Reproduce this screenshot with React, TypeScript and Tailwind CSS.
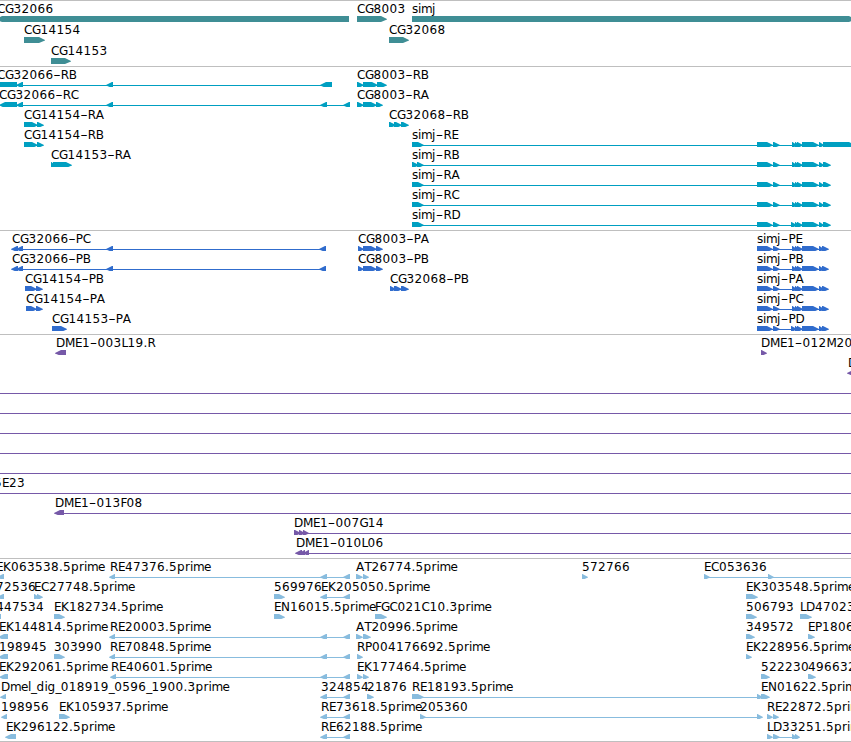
import { Fragment } from 'react';

type Dir = 'r' | 'l' | 'b';
type Feature = [Dir, number, number];
type Label = [number, string];

interface RowData {
  labels?: Label[];
  features?: Feature[];
  lines?: [number, number][];
}

interface TrackData {
  name: string;
  color: string;
  pitch: number;
  pad: string;
  rows: RowData[];
}

// Horizontal advance of each character in the label face, in pixels.
const ADVANCE: Record<string, number> = {
  C: 8, G: 8.4, R: 8, B: 8, A: 8.6, P: 7, E: 7, D: 9, M: 10, F: 6, L: 6, K: 8,
  T: 7, N: 9, '-': 7.4, '.': 4, _: 5.4, s: 6, i: 3, m: 11, j: 4, p: 8, r: 5,
  e: 7, d: 8, g: 8, l: 3,
};

const advance = (text: string) =>
  text.split('').reduce((sum, ch) => sum + (ADVANCE[ch] ?? 8), 0);

function glyphPositions(x: number, text: string) {
  return text
    .split('')
    .map((_, i) => x + advance(text.slice(0, i)))
    .join(' ');
}

// Hyphens are stretched to the wide dash of the label face.
function LabelText({ label: [x, text] }: { label: Label }) {
  const [head, tail] = text.split('-');
  const dashX = x + advance(head);
  return (
    <text y={12} fontSize={12} fill="#000">
      <tspan x={glyphPositions(x, head)}>{head}</tspan>
      {tail !== undefined && (
        <Fragment>
          <tspan x={dashX - 0.2} textLength={7.5} lengthAdjust="spacingAndGlyphs">-</tspan>
          <tspan x={glyphPositions(dashX + ADVANCE['-'], tail)}>{tail}</tspan>
        </Fragment>
      )}
    </text>
  );
}

function Exon({ feature: [dir, a, b] }: { feature: Feature }) {
  if (dir === 'b') return <rect x={a} y={15} width={b - a} height={6} />;
  const head = Math.min(b - a - 0.5, 6);
  const pts =
    dir === 'r'
      ? `${a},15 ${b - head},15 ${b},17.9 ${b},18.4 ${b - head},21 ${a},21`
      : `${b},15 ${a + head},15 ${a},17.9 ${a},18.4 ${a + head},21 ${b},21`;
  return <polygon points={pts} />;
}

function Row({ row, height, color }: { row: RowData; height: number; color: string }) {
  return (
    <svg width={851} height={height} viewBox={`0 0 851 ${height}`} className="block shrink-0 overflow-hidden">
      <g fill={color}>
        {row.lines?.map(([a, b], i) => (
          <rect key={i} x={a} y={18} width={b - a} height={1} shapeRendering="crispEdges" />
        ))}
        {row.features?.map((f, i) => <Exon key={i} feature={f} />)}
      </g>
      {row.labels?.map((label, i) => <LabelText key={i} label={label} />)}
    </svg>
  );
}

const simjExons = (start: number): Feature[] => [
  ['r', 757, 773], ['r', 773, 780], ['r', start, 797], ['r', 795, 799], ['r', 797, 803],
  ['r', 802, 819], ['r', 819, 824],
];

const simjTranscript = (head: Feature[], tail: Feature, start = 792) => ({
  lines: [[412, 825]] as [number, number][],
  features: [...head, ...simjExons(start), tail],
});

const simjProtein = (start = 792) => ({
  lines: [[757, 825]] as [number, number][],
  features: [...simjExons(start), ['r', 822, 829] as Feature],
});

const head412: Feature[] = [['r', 412, 424]];
const tail830: Feature = ['r', 823, 831];
const pair: Feature[] = [['l', 320, 327], ['l', 343, 350]];
const re = (x = 110) => ({
  features: [['l', x - 1, x + 5] as Feature, ...pair],
  line: [x, 350] as [number, number],
});

const sa = simjTranscript([['r', 412, 419], ['r', 417, 424]], tail830);
const sb = simjTranscript(head412, tail830);
const sd = simjTranscript(head412, tail830, 791);
const se = simjTranscript(head412, ['r', 823, 855]);

const full: RowData = { lines: [[0, 851]] };

const TRACKS: TrackData[] = [
  {
    name: 'genes', color: '#3f8e95', pitch: 21, pad: 'pb-[2px]',
    rows: [
      { labels: [[-3, 'CG32066'], [357, 'CG8003'], [412, 'simj']], features: [['l', -4, 349], ['r', 357, 387], ['r', 412, 855]] },
      { labels: [[24, 'CG14154'], [389, 'CG32068']], features: [['r', 24, 45], ['r', 389, 409]] },
      { labels: [[51, 'CG14153']], features: [['r', 51, 71]] },
    ],
  },
  {
    name: 'transcripts', color: '#009fc1', pitch: 20, pad: 'pb-[3px]',
    rows: [
      {
        labels: [[-3, 'CG32066-RB'], [357, 'CG8003-RB']],
        lines: [[17, 332]],
        features: [['b', 0, 17], ['l', 16, 23], ['l', 106, 113], ['l', 320, 332], ['r', 357, 364], ['r', 363, 378], ['r', 377, 387]],
      },
      {
        labels: [[-1, 'CG32066-RC'], [357, 'CG8003-RA']],
        lines: [[17, 350]],
        features: [['l', -1, 17], ['l', 16, 23], ['l', 106, 113], ['l', 320, 327], ['l', 343, 350], ['r', 357, 364], ['r', 363, 377], ['r', 376, 383]],
      },
      {
        labels: [[24, 'CG14154-RA'], [389, 'CG32068-RB']],
        features: [['r', 24, 38], ['r', 37, 44], ['r', 389, 396], ['r', 394, 402], ['r', 401, 409]],
      },
      {
        labels: [[24, 'CG14154-RB'], [412, 'simj-RE']],
        lines: se.lines,
        features: [['r', 24, 38], ['r', 37, 44], ...se.features],
      },
      { labels: [[51, 'CG14153-RA'], [412, 'simj-RB']], lines: sa.lines, features: [['r', 51, 55], ['r', 53, 72], ...sa.features] },
      { labels: [[412, 'simj-RA']], ...sb },
      { labels: [[412, 'simj-RC']], ...sb },
      { labels: [[412, 'simj-RD']], ...sd },
    ],
  },
  {
    name: 'proteins', color: '#306ccd', pitch: 20, pad: 'pb-[3px]',
    rows: [
      {
        labels: [[12, 'CG32066-PC'], [358, 'CG8003-PA'], [757, 'simj-PE']],
        lines: [[14, 326], ...simjProtein().lines],
        features: [['l', 11, 18], ['l', 16, 23], ['l', 106, 113], ['l', 319, 326], ['r', 358, 364], ['r', 363, 377], ['r', 376, 383], ...simjProtein().features],
      },
      {
        labels: [[12, 'CG32066-PB'], [358, 'CG8003-PB'], [757, 'simj-PB']],
        lines: [[14, 326], ...simjProtein().lines],
        features: [['l', 11, 18], ['l', 16, 23], ['l', 106, 113], ['l', 319, 326], ['r', 358, 364], ['r', 363, 377], ['r', 376, 383], ...simjProtein().features],
      },
      {
        labels: [[25, 'CG14154-PB'], [390, 'CG32068-PB'], [757, 'simj-PA']],
        lines: simjProtein().lines,
        features: [['r', 25, 37], ['r', 36, 43], ['r', 390, 396], ['r', 394, 402], ['r', 401, 409], ...simjProtein().features],
      },
      {
        labels: [[26, 'CG14154-PA'], [757, 'simj-PC']],
        lines: simjProtein().lines,
        features: [['r', 26, 37], ['r', 36, 43], ...simjProtein().features],
      },
      {
        labels: [[52, 'CG14153-PA'], [757, 'simj-PD']],
        lines: simjProtein(791).lines,
        features: [['r', 52, 67], ...simjProtein(791).features],
      },
    ],
  },
  {
    name: 'bac-ends', color: '#7659a8', pitch: 20, pad: 'pb-[3px]',
    rows: [
      { labels: [[56, 'DME1-003L19.R'], [761, 'DME1-012M20']], features: [['l', 55, 66], ['r', 761, 767]] },
      { labels: [[848, 'D']], features: [['l', 847, 857]] },
      full, full, full, full, full,
      { labels: [[-6, '5E23']], ...full },
      { labels: [[55, 'DME1-013F08']], features: [['l', 54, 64]], lines: [[64, 851]] },
      { labels: [[294, 'DME1-007G14']], features: [['r', 294, 301], ['r', 299, 305], ['r', 303, 309]], lines: [[294, 851]] },
      { labels: [[296, 'DME1-010L06']], features: [['l', 295, 302], ['l', 299, 305], ['l', 303, 309]], lines: [[298, 851]] },
    ],
  },
  {
    name: 'ests', color: '#88bcde', pitch: 20, pad: 'pb-[2px]',
    rows: [
      {
        labels: [[-4, 'EK063538.5prime'], [110, 'RE47376.5prime'], [356, 'AT26774.5prime'], [582, '572766'], [704, 'EC053636']],
        lines: [re().line, [704, 851]],
        features: [['l', -3, 4], ...re().features, ['r', 356, 363], ['r', 363, 369], ['r', 582, 588], ['r', 704, 710], ['r', 768, 774]],
      },
      {
        labels: [[-4, '72536'], [34, 'EC27748.5prime'], [274, '569976'], [321, 'EK205050.5prime'], [746, 'EK303548.5prime']],
        lines: [[321, 350]],
        features: [['l', -3, 4], ['r', 34, 39], ['r', 37, 43], ['r', 274, 285], ...pair, ['r', 746, 758]],
      },
      {
        labels: [[-4, '447534'], [54, 'EK182734.5prime'], [274, 'EN16015.5prime'], [375, 'FGC021C10.3prime'], [746, '506793'], [800, 'LD47023']],
        features: [['b', 0, 1], ['r', 54, 65], ['r', 274, 285], ['r', 375, 387], ['r', 746, 757], ['r', 800, 812]],
      },
      {
        labels: [[-1, 'EK144814.5prime'], [110, 'RE20003.5prime'], [356, 'AT20996.5prime'], [746, '349572'], [808, 'EP1806']],
        lines: [re().line],
        features: [['l', -2, 8], ...re().features, ['r', 356, 363], ['r', 363, 371], ['r', 746, 755], ['r', 808, 815]],
      },
      {
        labels: [[-1, '198945'], [54, '303990'], [110, 'RE70848.5prime'], [357, 'RP004176692.5prime'], [746, 'EK228956.5prime']],
        lines: [re().line],
        features: [['l', -2, 8], ['r', 54, 65], ...re().features, ['r', 357, 363], ['r', 746, 752]],
      },
      {
        labels: [[-1, 'EK292061.5prime'], [111, 'RE40601.5prime'], [357, 'EK177464.5prime'], [761, '522230'], [808, '496632']],
        lines: [re(111).line],
        features: [['l', -1, 8], ...re(111).features, ['r', 357, 363], ['r', 363, 369], ['r', 761, 770], ['r', 808, 816]],
      },
      {
        labels: [[1, 'Dmel_dig_018919_0596_1900.3prime'], [321, '324854'], [367, '21876'], [412, 'RE18193.5prime'], [761, 'EN01622.5prime']],
        lines: [[321, 350], [412, 762]],
        features: [['l', 0, 6], ...pair, ['r', 367, 374], ['r', 412, 424], ['r', 757, 763], ['r', 761, 770]],
      },
      {
        labels: [[1, '198956'], [59, 'EK105937.5prime'], [321, 'RE73618.5prime'], [420, '205360'], [767, 'RE22872.5prime']],
        lines: [[321, 350], [420, 760]],
        features: [['l', 1, 7], ['r', 59, 70], ...pair, ['r', 420, 426], ['r', 757, 763], ['r', 767, 773], ['r', 773, 779]],
      },
      {
        labels: [[6, 'EK296122.5prime'], [321, 'RE62188.5prime'], [767, 'LD33251.5prime']],
        lines: [[321, 350], [773, 796]],
        features: [['l', 5, 16], ...pair, ['r', 767, 773], ['r', 773, 780], ['r', 792, 797], ['r', 795, 800]],
      },
    ],
  },
];

export default function App() {
  return (
    <main className="flex h-[742px] w-[851px] flex-col overflow-hidden border-b border-[#bfbfbf] bg-white font-['DejaVu_Sans',sans-serif]">
      {TRACKS.map((track) => (
        <section key={track.name} className={`flex shrink-0 flex-col border-t border-[#bfbfbf] ${track.pad}`}>
          {track.rows.map((row, i) => (
            <Row key={i} row={row} height={track.pitch} color={track.color} />
          ))}
        </section>
      ))}
    </main>
  );
}
